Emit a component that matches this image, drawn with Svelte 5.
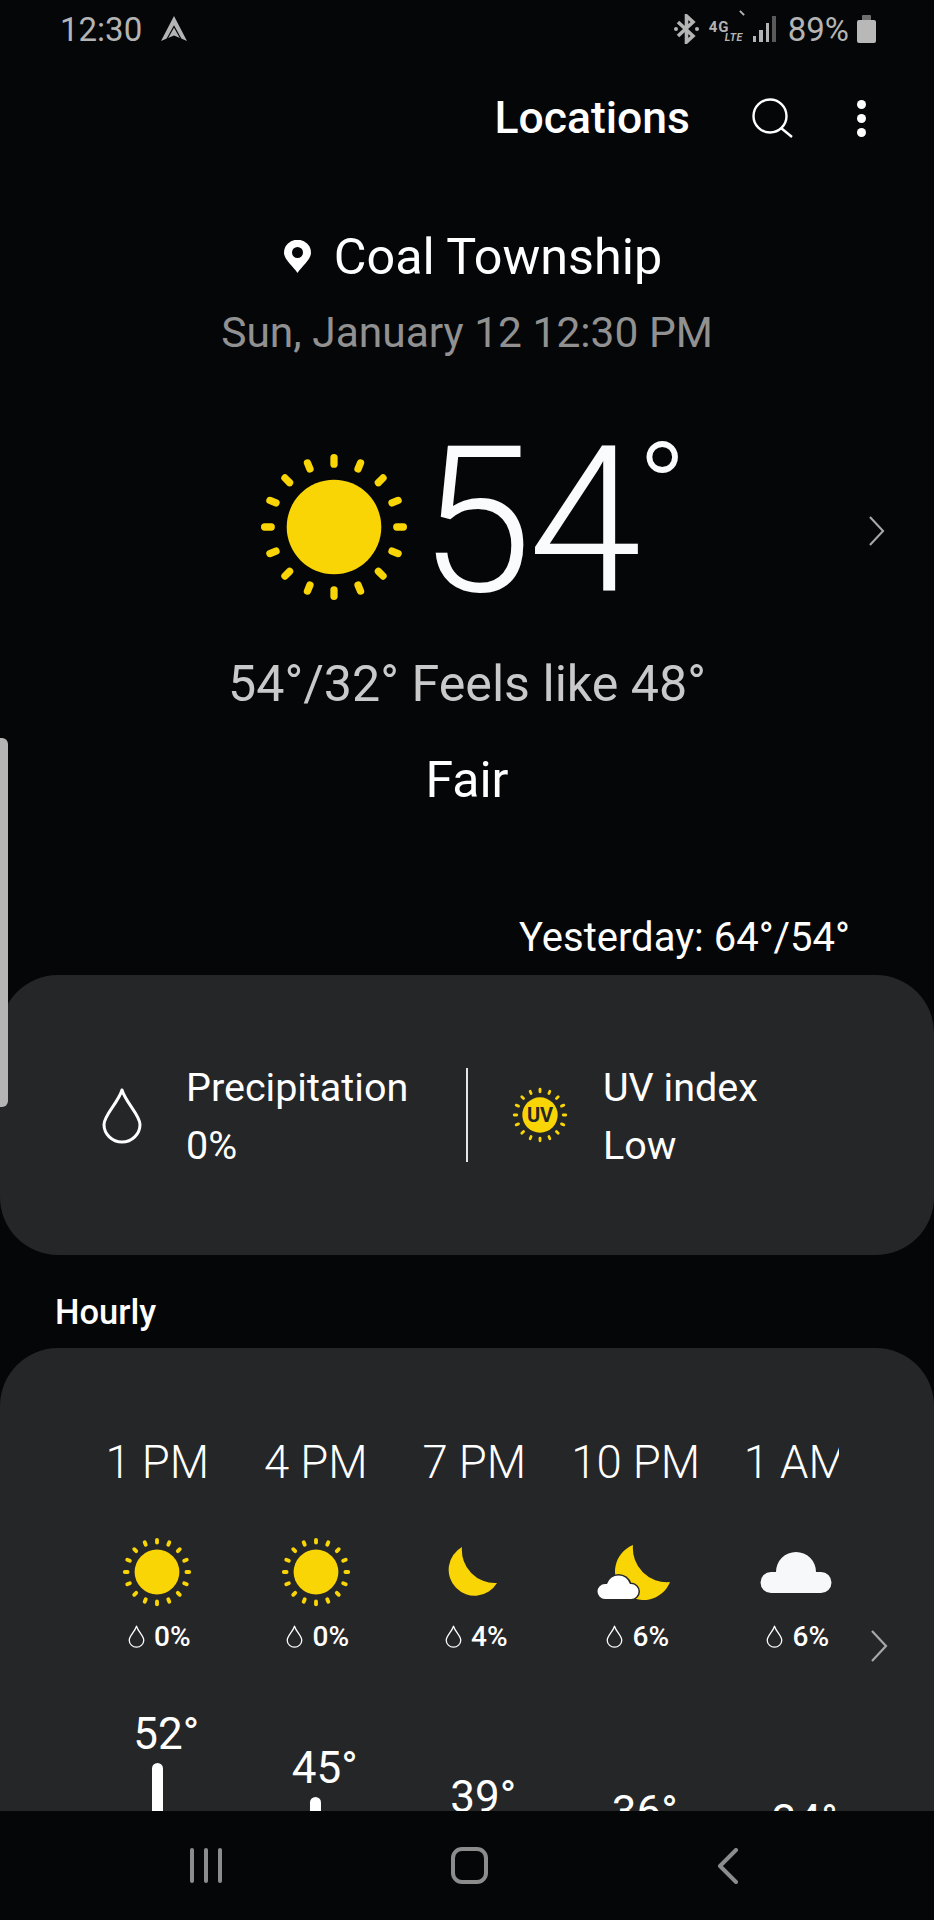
<script>
	const sunRays = Array.from({ length: 16 }, (_, i) => i * 22.5);

	const hours = [
		{ time: '1 PM', icon: 'sun', rain: '0%', temp: 52 },
		{ time: '4 PM', icon: 'sun', rain: '0%', temp: 45 },
		{ time: '7 PM', icon: 'moon', rain: '4%', temp: 39 },
		{ time: '10 PM', icon: 'mooncloud', rain: '6%', temp: 36 },
		{ time: '1 AM', icon: 'cloud', rain: '6%', temp: 34 }
	];

	const tempOffset = (t) => 60 + (52 - t) * 4.85;
</script>

{#snippet sun(size, disc, inner, outer, width)}
	<svg width={size} height={size} viewBox="-50 -50 100 100">
		<circle r={disc} fill="#f9d506" />
		{#each sunRays as a}
			<line
				x1="0"
				y1={-inner}
				x2="0"
				y2={-outer}
				stroke="#f9d506"
				stroke-width={width}
				stroke-linecap="round"
				transform="rotate({a})"
			/>
		{/each}
	</svg>
{/snippet}

{#snippet drop(w, h, sw)}
	<svg width={w} height={h} viewBox="0 0 42 57">
		<path
			d="M21 3C17 16 3 28 3 37.500a18 17.500 0 0 0 36 0C39 28 25 16 21 3Z"
			fill="none"
			stroke="#fff"
			stroke-width={sw}
			stroke-linejoin="round"
		/>
	</svg>
{/snippet}

{#snippet chevron(w, h)}
	<svg width={w} height={h} viewBox="0 0 18 32">
		<path d="M2 1L16 16L2 31" fill="none" stroke="#a8a8a8" stroke-width="2.200" />
	</svg>
{/snippet}

<div class="screen">
	<header class="status">
		<span class="clock">12:30</span>
		<svg class="nav-arrow" width="26" height="26" viewBox="0 0 26 26">
			<path d="M13 0L26 25L13 19.500L0 25Z" fill="#b4b4b4" />
			<path d="M6 23L13 10.500L20 23" fill="none" stroke="#050608" stroke-width="1.200" />
		</svg>
		<div class="status-right">
			<svg width="25" height="30" viewBox="0 0 25 30">
				<path
					d="M4 8L19 22L12.500 28V2L19 8L4 22"
					fill="none"
					stroke="#b4b4b4"
					stroke-width="3.600"
				/>
				<circle cx="2" cy="15" r="2" fill="#b4b4b4" />
				<circle cx="23" cy="15" r="2" fill="#b4b4b4" />
			</svg>
			<div class="net">
				<span class="net-4g">4G</span>
				<span class="net-lte">LTE</span>
				<i class="net-tick"></i>
			</div>
			<div class="signal">
				<i style="height:6px"></i>
				<i style="height:12px"></i>
				<i style="height:19px"></i>
				<i class="dim" style="height:26px"></i>
			</div>
			<span class="pct">89%</span>
			<div class="battery"><i></i><b></b></div>
		</div>
	</header>

	<main class="content">
		<div class="toolbar">
			<span class="toolbar-title">Locations</span>
			<svg class="search" width="42" height="40" viewBox="0 0 42 40">
				<circle cx="18" cy="18" r="16.500" fill="none" stroke="#fff" stroke-width="2.400" />
				<path d="M29 30L40 39" stroke="#fff" stroke-width="2.400" />
			</svg>
			<div class="kebab"><i></i><i></i><i></i></div>
		</div>

		<section class="place">
			<div class="place-name">
				<svg width="27" height="33" viewBox="0 0 27 33">
					<path
						fill-rule="evenodd"
						d="M13.500 33C9 26 0 19.500 0 12.800A13.200 12.800 0 0 1 27 12.800C27 19.500 18 26 13.500 33ZM13.500 18A5.500 5.500 0 1 0 13.500 7A5.500 5.500 0 0 0 13.500 18Z"
						fill="#fff"
					/>
				</svg>
				<span>Coal Township</span>
			</div>
			<div class="place-date">Sun, January 12 12:30 PM</div>
		</section>

		<section class="now">
			{@render sun(146, 32.400, 43, 47.500, 5)}
			<span class="now-temp">54<span class="now-deg">°</span></span>
			<span class="now-more">{@render chevron(17, 30)}</span>
		</section>

		<div class="feels">54°/32° Feels like 48°</div>
		<div class="cond">Fair</div>
		<div class="yesterday">Yesterday: 64°/54°</div>

		<section class="card summary">
			<div class="stat stat-rain">
				{@render drop(42, 57, 3)}
				<div class="stat-text">
					<span>Precipitation</span>
					<span>0%</span>
				</div>
			</div>
			<div class="divider"></div>
			<div class="stat stat-uv">
				<div class="uv-icon">
					{@render sun(56, 31.600, 41.500, 46, 5)}
					<span>UV</span>
				</div>
				<div class="stat-text">
					<span>UV index</span>
					<span>Low</span>
				</div>
			</div>
		</section>

		<h2 class="section-title">Hourly</h2>

		<section class="card hourly">
			<div class="hours">
				{#each hours as h}
					<div class="hour">
						<div class="hour-time">{h.time}</div>
						<div class="hour-icon">
							{#if h.icon === 'sun'}
								{@render sun(70, 32, 42, 46, 5.500)}
							{:else if h.icon === 'moon'}
								<svg class="moon" width="54" height="54" viewBox="0 0 54 54">
									<path d="M17 2A26 26 0 1 0 52 38A33 33 0 0 1 17 2Z" fill="#f9d506" />
								</svg>
							{:else if h.icon === 'mooncloud'}
								<svg class="mooncloud" width="78" height="58" viewBox="0 0 78 58">
									<path d="M37 2A28.500 28.500 0 1 0 74 39A34 34 0 0 1 37 2Z" fill="#f9d506" />
									<path
										d="M9 56A7.500 7.500 0 0 1 9 41L11 41A12 12 0 0 1 34 41L35 41A7.500 7.500 0 0 1 35 56Z"
										fill="#fff"
										stroke="#252628"
										stroke-width="3"
										paint-order="stroke"
									/>
								</svg>
							{:else}
								<svg class="cloud" width="72" height="42" viewBox="0 0 72 42">
									<path
										d="M11 42A10.500 10.500 0 0 1 11 21L16 21A20 20 0 0 1 56 21L61 21A10.500 10.500 0 0 1 61 42Z"
										fill="#f7f8fa"
									/>
								</svg>
							{/if}
						</div>
						<div class="hour-rain">
							{@render drop(17, 23, 3.200)}
							<span>{h.rain}</span>
						</div>
						<div class="hour-temp" style="margin-top: {tempOffset(h.temp)}px">{h.temp}°</div>
						<div class="hour-bar"></div>
					</div>
				{/each}
			</div>
			<span class="hourly-more">{@render chevron(18, 32)}</span>
		</section>
	</main>

	<nav class="navbar">
		<div class="nav-recents"><i></i><i></i><i></i></div>
		<div class="nav-home"></div>
		<svg width="22" height="36" viewBox="0 0 22 36">
			<path
				d="M19 2L3 18L19 34"
				fill="none"
				stroke="#8c8c8c"
				stroke-width="4"
				stroke-linecap="round"
				stroke-linejoin="round"
			/>
		</svg>
	</nav>

	<div class="edge-handle"></div>
</div>

<style>
	:global(body) {
		background: #050608;
	}

	.screen {
		position: relative;
		display: flex;
		flex-direction: column;
		width: 934px;
		height: 1920px;
		overflow: hidden;
		background: #050608;
		color: #fff;
		font-family: Roboto, 'Liberation Sans', sans-serif;
	}

	.status {
		display: flex;
		align-items: center;
		flex: none;
		height: 58px;
		padding: 0 58px 0 60px;
		color: #b4b4b4;
		font-size: 33px;
	}

	.nav-arrow {
		margin-left: 19px;
	}

	.status-right {
		display: flex;
		align-items: center;
		margin-left: auto;
	}

	.net {
		position: relative;
		width: 34px;
		height: 30px;
		margin-left: 10px;
		color: #b4b4b4;
		font-weight: 700;
	}

	.net-4g {
		position: absolute;
		left: 0;
		top: 8px;
		font-size: 15px;
		letter-spacing: 1px;
		line-height: 11px;
	}

	.net-lte {
		position: absolute;
		right: 0;
		top: 19px;
		font-size: 10.500px;
		font-style: italic;
		letter-spacing: 0.500px;
		line-height: 9px;
	}

	.net-tick {
		position: absolute;
		right: -2px;
		top: -2px;
		width: 6px;
		height: 2px;
		background: #b4b4b4;
		transform: rotate(45deg);
	}

	.signal {
		display: flex;
		align-items: flex-end;
		gap: 3px;
		height: 26px;
		margin-left: 10px;
	}

	.signal i {
		width: 3.500px;
		background: #b4b4b4;
	}

	.signal i.dim {
		background: #5a5a5a;
	}

	.pct {
		margin-left: 12px;
	}

	.battery {
		display: flex;
		flex-direction: column;
		align-items: center;
		margin-left: 8px;
	}

	.battery i {
		width: 9px;
		height: 5px;
		background: #6e6e6e;
		border-radius: 1px 1px 0 0;
	}

	.battery b {
		width: 19px;
		height: 23px;
		background: #b8b8b8;
		border-radius: 2px;
	}

	.content {
		flex: 1;
		min-height: 0;
		overflow: hidden;
	}

	.toolbar {
		display: flex;
		align-items: center;
		justify-content: flex-end;
		height: 40px;
		margin-top: 40px;
		padding-right: 68px;
	}

	.toolbar-title {
		font-size: 44.500px;
		font-weight: 500;
	}

	.search {
		margin-left: 62px;
	}

	.kebab {
		display: flex;
		flex-direction: column;
		gap: 5px;
		margin-left: 63px;
	}

	.kebab i {
		width: 9px;
		height: 9px;
		border-radius: 50%;
		background: #fff;
	}

	.place {
		margin-top: 88px;
		text-align: center;
	}

	.place-name {
		display: flex;
		align-items: center;
		justify-content: center;
		gap: 23px;
		height: 60px;
		padding-left: 12px;
		font-size: 50.300px;
	}

	.place-date {
		margin-top: 22px;
		color: #919191;
		font-size: 42.500px;
		line-height: 50px;
	}

	.now {
		position: relative;
		display: flex;
		align-items: center;
		height: 170px;
		margin-top: 84px;
		padding-left: 261px;
	}

	.now-temp {
		margin-left: 12px;
		margin-bottom: 10px;
		color: #fafbfd;
		font-size: 204px;
		font-weight: 300;
		letter-spacing: -4px;
		line-height: 170px;
		white-space: nowrap;
	}

	.now-deg {
		font-size: 132px;
		vertical-align: 55px;
		line-height: 0;
	}

	.now-more {
		position: absolute;
		right: 49px;
		top: 74px;
	}

	.feels {
		margin-top: 42px;
		color: #c9c9c9;
		font-size: 50.200px;
		line-height: 60px;
		text-align: center;
	}

	.cond {
		margin-top: 36px;
		font-size: 50px;
		line-height: 60px;
		text-align: center;
	}

	.yesterday {
		margin-top: 103px;
		padding-right: 84px;
		font-size: 40px;
		line-height: 50px;
		text-align: right;
	}

	.card {
		background: #252628;
		border-radius: 58px;
	}

	.summary {
		display: flex;
		align-items: center;
		height: 280px;
		margin-top: 12px;
	}

	.stat {
		display: flex;
		align-items: center;
	}

	.stat-rain {
		box-sizing: border-box;
		width: 466px;
		padding-left: 101px;
		gap: 43px;
	}

	.stat-uv {
		gap: 35px;
		padding-left: 44px;
	}

	.stat-text {
		display: flex;
		flex-direction: column;
		gap: 8px;
		padding-top: 4px;
		font-size: 39.500px;
		line-height: 50px;
	}

	.divider {
		width: 2px;
		height: 94px;
		background: #e6e6e6;
	}

	.uv-icon {
		position: relative;
		display: flex;
		width: 56px;
		height: 56px;
	}

	.uv-icon span {
		position: absolute;
		inset: 0;
		color: #252628;
		font-size: 20px;
		font-weight: 700;
		line-height: 56px;
		text-align: center;
	}

	.section-title {
		margin: 36px 0 0;
		padding-left: 55px;
		font-size: 34.500px;
		font-weight: 500;
		line-height: 42px;
	}

	.hourly {
		position: relative;
		height: 600px;
		margin-top: 15px;
		padding-left: 78px;
		border-radius: 58px 58px 0 0;
	}

	.hours {
		display: flex;
		width: 761px;
		overflow: hidden;
	}

	.hour {
		flex: none;
		width: 158.500px;
		padding-top: 90px;
		text-align: center;
		white-space: nowrap;
	}

	/* the last two columns sit a little wider apart */
	.hour:nth-child(4) {
		margin-left: 3px;
	}

	.hour:nth-child(5) {
		margin-left: 1.500px;
	}

	.hour-time {
		font-size: 45.500px;
		font-weight: 300;
		line-height: 50px;
	}

	.hour-icon {
		display: flex;
		align-items: center;
		justify-content: center;
		height: 70px;
		margin-top: 49px;
	}

	.moon {
		margin-right: 4px;
	}

	.mooncloud {
		margin-right: 2px;
	}

	.hour-rain {
		display: flex;
		align-items: center;
		justify-content: center;
		gap: 9px;
		height: 30px;
		margin-top: 14px;
		padding-left: 4px;
		font-size: 28px;
		font-weight: 500;
	}

	.hour-temp {
		height: 46px;
		padding-left: 18px;
		font-size: 44px;
		line-height: 46px;
	}

	.hour-bar {
		width: 11px;
		height: 120px;
		margin: 6px auto 0;
		background: #fff;
		border-radius: 6px 6px 0 0;
	}

	.hourly-more {
		position: absolute;
		left: 870px;
		top: 282px;
	}

	.navbar {
		display: flex;
		align-items: center;
		justify-content: space-between;
		flex: none;
		height: 109px;
		padding: 0 195px 0 190px;
		background: #050608;
	}

	.nav-recents {
		display: flex;
		gap: 10px;
	}

	.nav-recents i {
		width: 4px;
		height: 35px;
		background: #8c8c8c;
		border-radius: 2px;
	}

	.nav-home {
		box-sizing: border-box;
		width: 37px;
		height: 37px;
		border: 4px solid #8c8c8c;
		border-radius: 11px;
	}

	.edge-handle {
		position: absolute;
		left: 0;
		top: 738px;
		width: 8px;
		height: 369px;
		background: #b4b4b4;
		border-radius: 0 6px 6px 0;
	}
</style>
